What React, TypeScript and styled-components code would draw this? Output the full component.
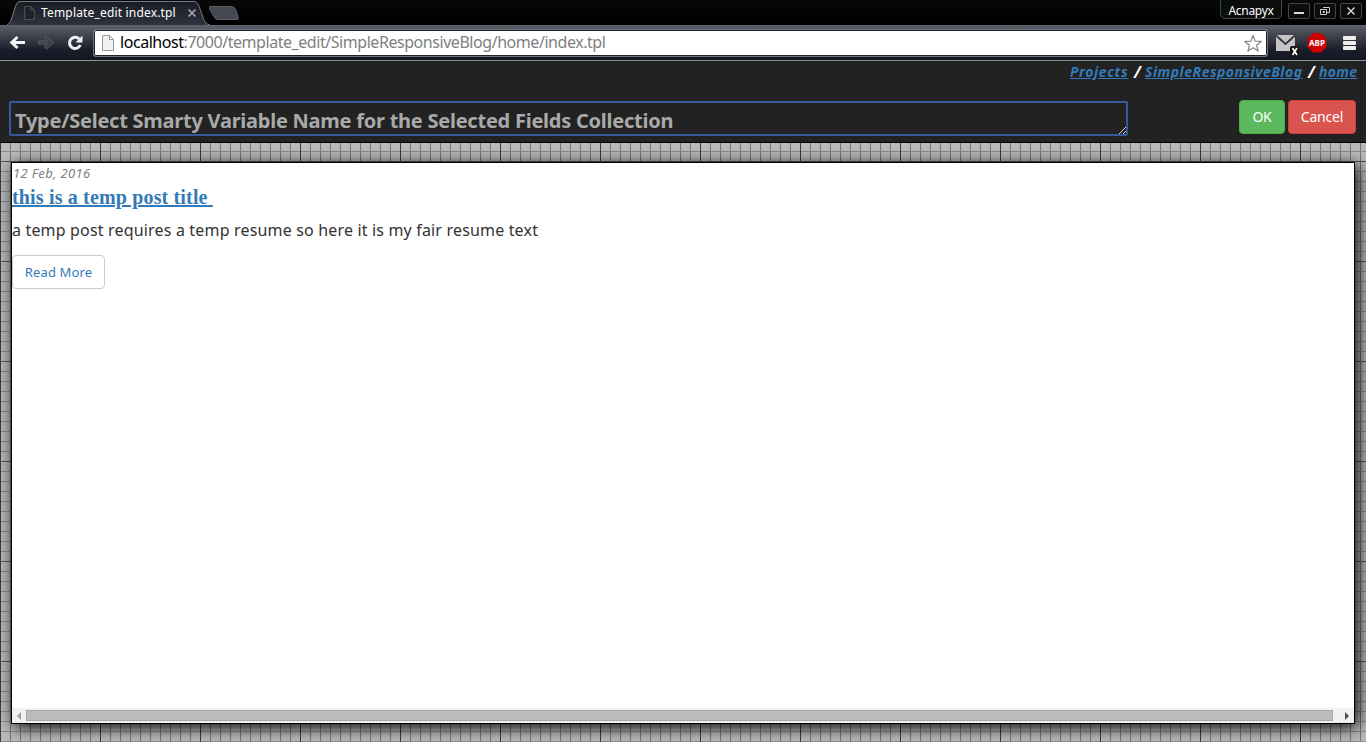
import React from "react";
import styled, { createGlobalStyle } from "styled-components";

const ui = `"Noto Sans", "Open Sans", sans-serif`;

const GlobalStyle = createGlobalStyle`
  * { box-sizing: border-box; }
  html, body { margin: 0; padding: 0; }
  body { font-family: ${ui}; overflow: hidden; background: #222; }
`;

const Window = styled.div`
  width: 1366px;
  height: 742px;
  display: flex;
  flex-direction: column;
  overflow: hidden;
`;

const TabStrip = styled.div`
  height: 25px;
  flex: none;
  display: flex;
  align-items: flex-start;
  background: linear-gradient(#070808, #000);
  padding-left: 7px;
`;

const Tab = styled.div`
  width: 202px;
  height: 25px;
  position: relative;
  display: flex;
  align-items: center;
  padding-left: 17px;
  > svg { position: relative; flex: none; }
`;

const TabShape = styled.svg`
  && { position: absolute; left: 0; top: 0; }
`;

const TabTitle = styled.span`
  position: relative;
  width: 137px;
  margin-left: 6px;
  font-size: 12px;
  letter-spacing: 0.17px;
  line-height: 16px;
  color: #fff;
  white-space: nowrap;
  margin-right: 9px;
`;

const WindowControls = styled.div`
  margin-left: auto;
  display: flex;
  padding-right: 4px;
`;

const UserName = styled.div`
  width: 62px;
  height: 20px;
  margin-top: -1px;
  margin-right: 2px;
  border: 1px solid #444;
  border-radius: 0 0 5px 5px;
  background: #0b0c0c;
  color: #fff;
  font-size: 12px;
  letter-spacing: -0.3px;
  line-height: 21px;
  text-align: center;
`;

const ControlButton = styled.div`
  width: 22px;
  height: 16px;
  margin-top: 3px;
  margin-left: 4px;
  border: 1px solid #444;
  border-radius: 2px;
  background: #0b0c0c;
  display: flex;
  align-items: center;
  justify-content: center;
`;

const Toolbar = styled.div`
  height: 36px;
  flex: none;
  display: flex;
  align-items: flex-start;
  padding: 4px 8px 0 8px;
  border-bottom: 1px solid #8f9190;
  background: linear-gradient(#60626c 0, #4d4f5a 6px, #333541 16px, #1b1d2a 25px, #121522 35px);
`;

const NavIcon = styled.svg<{ $gap: number; $left?: number; $top?: number }>`
  flex: none;
  margin-top: ${(p) => p.$top ?? 5}px;
  margin-left: ${(p) => p.$left ?? 0}px;
  margin-right: ${(p) => p.$gap}px;
`;

const AddressBar = styled.div`
  width: 1175px;
  height: 28px;
  flex: none;
  display: flex;
  align-items: center;
  border: 1px solid #6e7079;
  border-radius: 3px;
  box-shadow: inset 0 0 0 1px #20222c;
  background: #fff;
  padding: 0 4px 0 8px;
`;

const Url = styled.span`
  margin-left: 6px;
  margin-top: -2px;
  font-size: 16px;
  line-height: 22px;
  letter-spacing: -0.45px;
  color: #808080;
  white-space: nowrap;
  flex: 1;
  b { font-weight: 400; color: #000; }
`;

const Page = styled.div`
  flex: 1;
  display: flex;
  flex-direction: column;
  background-color: #bbb;
  background-image:
    linear-gradient(#555 1px, transparent 1px),
    linear-gradient(90deg, #3c3c3c 1px, transparent 1px),
    linear-gradient(#8c8c8c 1px, transparent 1px),
    linear-gradient(90deg, #777 1px, transparent 1px);
  background-size: 100px 100px, 100px 100px, 10px 10px, 10px 10px;
`;

const Header = styled.header`
  height: 82px;
  flex: none;
  background: #222;
  border-bottom: 1px solid #000;
  padding: 0 10px 0 9px;
`;

const Breadcrumb = styled.nav`
  height: 39px;
  margin-right: -1px;
  display: flex;
  justify-content: flex-end;
  font-size: 14px;
  line-height: 22px;
  font-weight: 700;
  font-style: italic;
  color: #fff;
  white-space: nowrap;
`;

const Crumb = styled.a<{ $w: number; $ls: number }>`
  width: ${(p) => p.$w}px;
  height: 22px;
  letter-spacing: ${(p) => p.$ls}px;
  color: #337ab7;
  text-decoration: underline;
`;

const Slash = styled.span`
  width: 17px;
  padding-left: 6px;
  font-size: 16px;
`;

const Form = styled.div`
  display: flex;
  align-items: flex-start;
`;

const VariableField = styled.div`
  width: 1119px;
  height: 35px;
  margin: 1px 111px 0 0;
  position: relative;
  border: 2px solid #35599b;
  border-radius: 2px;
  padding-left: 4px;
  font-size: 20px;
  line-height: 35px;
  font-weight: 700;
  letter-spacing: -0.245px;
  color: #a9a9a9;
  white-space: nowrap;
`;

const ResizeGrip = styled.svg`
  position: absolute;
  right: 0;
  bottom: 0;
`;

const Button = styled.button<{ $kind: "success" | "danger" }>`
  width: ${(p) => (p.$kind === "success" ? 46 : 68)}px;
  height: 34px;
  margin: 0 3px 0 0;
  padding: 0;
  border: 1px solid ${(p) => (p.$kind === "success" ? "#4cae4c" : "#d43f3a")};
  border-radius: 4px;
  background: ${(p) => (p.$kind === "success" ? "#5cb85c" : "#d9534f")};
  color: #fff;
  font: 14px/20px ${ui};
  letter-spacing: -0.2px;
  flex: none;
  &:last-child { margin: 0; }
`;

const Preview = styled.main`
  width: 1344px;
  height: 562px;
  margin: 19px 0 0 11px;
  flex: none;
  display: flex;
  flex-direction: column;
  border: 1px solid #000;
  background: #fff;
  box-shadow: 3px 3px 16px #000;
`;

const Post = styled.article`
  flex: 1;
`;

const PostDate = styled.div`
  height: 20px;
  padding-left: 1px;
  font-size: 13px;
  line-height: 21px;
  font-style: italic;
  letter-spacing: 0.35px;
  color: #808080;
`;

const PostTitle = styled.h2`
  margin: 0;
  height: 33px;
  font: 700 20px/29px "Liberation Serif", serif;
  letter-spacing: 0.16px;
  a {
    color: #337ab7;
    text-decoration: underline;
    text-decoration-thickness: 2px;
    white-space: pre;
  }
`;

const Summary = styled.p`
  margin: 0;
  height: 39px;
  font-size: 16px;
  line-height: 28px;
  letter-spacing: 0.17px;
  color: #333;
`;

const ReadMore = styled.a`
  display: block;
  width: 93px;
  height: 34px;
  border: 1px solid #ccc;
  border-radius: 4px;
  font-size: 13px;
  letter-spacing: 0.12px;
  line-height: 32px;
  text-align: center;
  color: #337ab7;
`;

const ScrollBar = styled.div`
  height: 15px;
  display: flex;
  align-items: center;
  background: #f1f1f1;
  justify-content: space-between;
  padding: 0 4px 0 4px;
`;

const Thumb = styled.div`
  width: 1307px;
  height: 11px;
  margin-right: 8px;
  border: 1px solid #a8a8a8;
  background: #bcbcbc;
`;

const PageGlyph = ({ dark }: { dark?: boolean }) => (
  <svg width={dark ? 11 : 12} height={dark ? 14 : 16} viewBox="0 0 12 16">
    <path
      d="M.5 .5H7.5L11.5 4.5V15.5H.5ZM7.5 .5V4.5H11.5"
      fill={dark ? "#20212a" : "#f1f1f1"}
      stroke={dark ? "#5b5b5b" : "#999"}
    />
  </svg>
);

export default function App() {
  return (
    <>
      <GlobalStyle />
      <Window>
        <TabStrip>
          <Tab>
            <TabShape width="203" height="25">
              <defs>
                <linearGradient id="tab" x1="0" y1="0" x2="0" y2="1">
                  <stop offset="0" stopColor="#191b24" />
                  <stop offset="1" stopColor="#30323e" />
                </linearGradient>
              </defs>
              <path
                d="M0 25Q3 24 4 20L9 5Q10 1.5 13 1.5H187Q190 1.5 191.500 5L197 20Q199 25 203 25"
                fill="url(#tab)"
                stroke="#777a80"
              />
            </TabShape>
            <PageGlyph dark />
            <TabTitle>Template_edit index.tpl</TabTitle>
            <svg width="10" height="10">
              <path d="M1.500 1.500L8.500 8.500M8.500 1.500L1.500 8.500" stroke="#aaa" strokeWidth="1.700" />
            </svg>
          </Tab>
          <svg width="32" height="25">
            <path
              d="M1 6.500H22Q25.500 6.500 27 10L29 16.500Q30 19.500 28 19.500H9Q6 19.500 4.500 16L.5 9Q-.2 6.500 1 6.500Z"
              fill="#454751"
              stroke="#5c5e66"
            />
          </svg>
          <WindowControls>
            <UserName>Acnapyx</UserName>
            <ControlButton>
              <svg width="12" height="10"><path d="M1 7H11" stroke="#ddd" strokeWidth="2" /></svg>
            </ControlButton>
            <ControlButton>
              <svg width="12" height="10">
                <path d="M4 1.500H10.500V6.500H8M1.500 3.500H7.500V8.500H1.500ZM4 5.500H5.500V6.500H4Z" fill="none" stroke="#ccc" />
              </svg>
            </ControlButton>
            <ControlButton>
              <svg width="10" height="10"><path d="M1.500 1.500L8.500 8.500M8.500 1.500L1.500 8.500" stroke="#ddd" strokeWidth="1.400" /></svg>
            </ControlButton>
          </WindowControls>
        </TabStrip>

        <Toolbar>
          <NavIcon width="18" height="18" $gap={11}>
            <path d="M9.500 3L3.800 8.500L9.500 14M4 8.500H17" fill="none" stroke="#f4f4f4" strokeWidth="3" />
          </NavIcon>
          <NavIcon width="18" height="18" $gap={11}>
            <path
              d="M1.500 7H10.500L7.500 4L9.500 2L16.500 8.500L9.500 15L7.500 13L10.500 10H1.500Z"
              fill="#3c3e48"
              stroke="#5c5e66"
            />
          </NavIcon>
          <NavIcon width="18" height="18" $gap={9}>
            <path d="M13.200 5A5.600 5.600 0 1 0 14.300 11" fill="none" stroke="#eee" strokeWidth="3" />
            <path d="M16.500 1.500V8.500H9.500Z" fill="#eee" />
          </NavIcon>
          <AddressBar>
            <PageGlyph />
            <Url>
              <b>localhost</b>:7000/template_edit/SimpleResponsiveBlog/home/index.tpl
            </Url>
            <svg width="19" height="19" viewBox="0.5 0 20 20">
              <path
                d="M10 1.500L12.300 7.500L18.700 7.800L13.700 11.800L15.400 18L10 14.500L4.600 18L6.300 11.800L1.300 7.800L7.700 7.500Z"
                fill="#fff"
                stroke="#888"
                strokeWidth="1.300"
                strokeLinejoin="round"
              />
            </svg>
          </AddressBar>
          <NavIcon width="24" height="24" $gap={7} $left={8}>
            <path d="M0 1H19V17H0Z" fill="#c4c4c4" />
            <path d="M0 1.500L9.500 10L19 1.500" fill="none" stroke="#333540" strokeWidth="1.800" />
            <rect x="14" y="12" width="9" height="11" rx="2" fill="#111" />
            <path d="M16.500 14L21 21M21 14L16.500 21" stroke="#fff" strokeWidth="1.700" />
          </NavIcon>
          <NavIcon width="20" height="20" $gap={15} $top={4}>
            <path d="M6 0H14L19.500 6V14L14 19.500H6L.5 14V6Z" fill="#cc0000" />
            <text x="10" y="13" fontSize="8.500" fontWeight="700" fill="#fff" textAnchor="middle" textLength="16" lengthAdjust="spacingAndGlyphs">
              ABP
            </text>
          </NavIcon>
          <NavIcon width="15" height="18" $gap={0}>
            <g fill="#eee">
              <rect x="1" y="2" width="13" height="4" rx="1" />
              <rect x="1" y="7" width="13" height="4" rx="1" />
              <rect x="1" y="12" width="13" height="4" rx="1" />
            </g>
          </NavIcon>
        </Toolbar>

        <Page>
          <Header>
            <Breadcrumb>
              <Crumb $w={58} $ls={0.58}>Projects</Crumb>
              <Slash>/</Slash>
              <Crumb $w={157} $ls={0.48}>SimpleResponsiveBlog</Crumb>
              <Slash>/</Slash>
              <Crumb $w={38} $ls={0.3}>home</Crumb>
            </Breadcrumb>
            <Form>
              <VariableField>
                Type/Select Smarty Variable Name for the Selected Fields Collection
                <ResizeGrip width="7" height="7">
                  <path d="M0 7L7 0M4 7L7 4" stroke="#ddd" />
                </ResizeGrip>
              </VariableField>
              <Button $kind="success">OK</Button>
              <Button $kind="danger">Cancel</Button>
            </Form>
          </Header>

          <Preview>
            <Post>
              <PostDate>12 Feb, 2016</PostDate>
              <PostTitle>
                <a>{"this is a temp post title "}</a>
              </PostTitle>
              <Summary>a temp post requires a temp resume so here it is my fair resume text</Summary>
              <ReadMore>Read More</ReadMore>
            </Post>
            <ScrollBar>
              <svg width="6" height="8"><path d="M5 0V8L1 4Z" fill="#a3a3a3" /></svg>
              <Thumb />
              <svg width="6" height="8"><path d="M1 0V8L5 4Z" fill="#505050" /></svg>
            </ScrollBar>
          </Preview>
        </Page>
      </Window>
    </>
  );
}
